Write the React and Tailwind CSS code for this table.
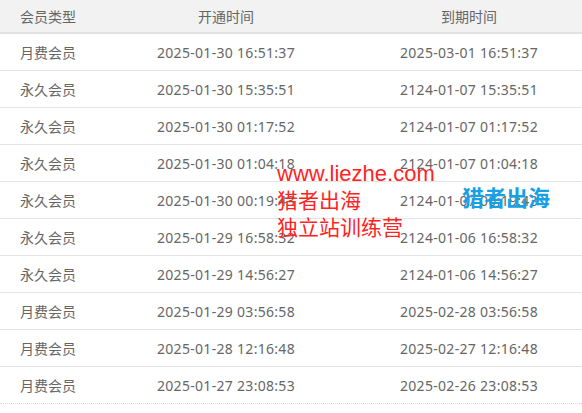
import React from "react";

const rows = [
  ["月费会员", "2025-01-30 16:51:37", "2025-03-01 16:51:37"],
  ["永久会员", "2025-01-30 15:35:51", "2124-01-07 15:35:51"],
  ["永久会员", "2025-01-30 01:17:52", "2124-01-07 01:17:52"],
  ["永久会员", "2025-01-30 01:04:18", "2124-01-07 01:04:18"],
  ["永久会员", "2025-01-30 00:19:43", "2124-01-07 00:19:43"],
  ["永久会员", "2025-01-29 16:58:32", "2124-01-06 16:58:32"],
  ["永久会员", "2025-01-29 14:56:27", "2124-01-06 14:56:27"],
  ["月费会员", "2025-01-29 03:56:58", "2025-02-28 03:56:58"],
  ["月费会员", "2025-01-28 12:16:48", "2025-02-27 12:16:48"],
  ["月费会员", "2025-01-27 23:08:53", "2025-02-26 23:08:53"],
];

const font = { fontFamily: '"Noto Sans", "Noto Sans CJK SC", sans-serif' };

export default function App() {
  return (
    <div className="relative w-[582px] h-[413px] bg-white overflow-hidden text-[14px] text-[#666]" style={font}>
      <div className="grid grid-cols-[96px_260px_226px] h-[34px] items-center bg-[#f2f2f2] border-b-2 border-[#e2e2e2]">
        <div className="pl-5">会员类型</div>
        <div className="text-center">开通时间</div>
        <div className="text-center">到期时间</div>
      </div>
      {rows.map((r, i) => (
        <div
          key={i}
          className={
            "grid grid-cols-[96px_260px_226px] h-[37px] items-center border-b " +
            (i === rows.length - 1 ? "border-dotted border-[#d8d8d8]" : "border-[#e4e4e4]")
          }
        >
          <div className="pl-5">{r[0]}</div>
          <div className="text-center tracking-[0.3px]">{r[1]}</div>
          <div className="text-center tracking-[0.3px]">{r[2]}</div>
        </div>
      ))}

      <div className="absolute left-[277px] top-[160px] flex flex-col text-[#ff2323] leading-[27px]">
        <span className="text-[22px]" style={{ fontFamily: '"Liberation Sans", Arial, sans-serif' }}>www.liezhe.com</span>
        <span className="text-[21px]">猎者出海</span>
        <span className="text-[21px]">独立站训练营</span>
      </div>
      <div className="absolute left-[462px] top-[184px] text-[22px] font-bold leading-[26px] text-[#16a0e6]">
        猎者出海
      </div>
    </div>
  );
}
